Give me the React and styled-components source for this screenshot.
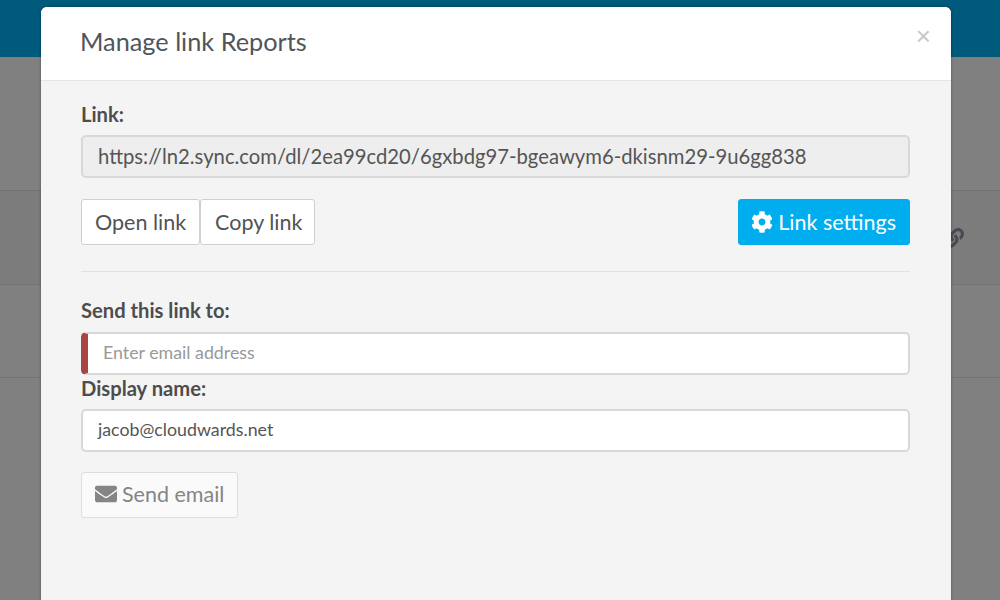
import React from "react";
import styled, { createGlobalStyle } from "styled-components";
import { FaCog, FaEnvelope, FaLink } from "react-icons/fa";

const Global = createGlobalStyle`
  html, body { margin: 0; padding: 0; height: 100%; overflow: hidden; background: #808080; }
  * { box-sizing: border-box; }
  body { font-family: Lato, "Open Sans", sans-serif; color: #464a4c; }
`;

const Page = styled.div`
  position: relative;
  width: 1000px;
  height: 600px;
  overflow: hidden;
  background: #808080;
`;
const TopBar = styled.div`
  height: 57px;
  background: #005a7c;
`;
const Rows = styled.div`
  padding-top: 133px;
`;
const Row = styled.div`
  height: ${(p) => p.$h}px;
  border-top: 1px solid #727272;
  background: ${(p) => (p.$active ? "#7c7c7c" : "transparent")};
  display: flex;
  justify-content: flex-end;
  align-items: center;
  padding-right: 36px;
  color: #484c52;
  font-size: 18px;
`;
const Modal = styled.div`
  position: absolute;
  left: 41px;
  top: 7px;
  width: 910px;
  height: 620px;
  border-radius: 6px 6px 0 0;
  background: #f4f4f4;
  box-shadow: 0 0 3px rgba(0, 0, 0, 0.35);
`;
const Header = styled.div`
  height: 74px;
  background: #fff;
  border-bottom: 1px solid #e5e5e5;
  border-radius: 6px 6px 0 0;
  display: flex;
  align-items: center;
  justify-content: space-between;
  padding: 0 20px 5px 39px;
`;
const Title = styled.h4`
  margin: 0;
  font-size: 25.3px;
  font-weight: 400;
  color: #50555a;
`;
const Close = styled.span`
  font-family: "Liberation Sans", sans-serif;
  font-size: 26px;
  font-weight: 400;
  color: #c8c8c8;
  margin-top: -9px;
`;
const Body = styled.div`
  padding: 21px 41px 0 40px;
`;
const Label = styled.label`
  display: block;
  margin-top: ${(p) => p.$mt || 0}px;
  margin-bottom: ${(p) => p.$mb || 9}px;
  font-size: 20.2px;
  font-weight: 700;
  line-height: 24px;
  color: #4d4d4d;
`;
const Field = styled.div`
  height: 43px;
  border: 2px solid #d8d8d8;
  border-radius: 5px;
  background: ${(p) => (p.$disabled ? "#eeeeee" : "#fff")};
  border-left: ${(p) => (p.$invalid ? "7px solid #a94442" : "2px solid #d8d8d8")};
  padding: 0 0 ${(p) => (p.$disabled ? 2 : 4)}px 15px;
  display: flex;
  align-items: center;
  font-size: ${(p) => p.$fs || 17.8}px;
  color: ${(p) => p.$color || "#555"};
  white-space: nowrap;
`;
const Actions = styled.div`
  display: flex;
  justify-content: space-between;
  margin-top: 21px;
`;
const Group = styled.div`
  display: flex;
`;
const Button = styled.button`
  height: 46px;
  padding: 0 13px;
  border: 1px solid #cfcfcf;
  border-radius: 3px;
  background: #fff;
  font: 400 21.5px Lato, sans-serif;
  color: #4f5358;
  display: inline-flex;
  align-items: center;
`;
const Copy = styled(Button)`
  padding: 0 12px 0 14px;
`;
const Primary = styled(Button)`
  background: #00aeef;
  border-color: #00aeef;
  color: #fff;
  gap: 5px;
  padding-left: 12px;
`;
const Divider = styled.hr`
  margin: 26px 0;
  border: 0;
  border-top: 1px solid #e2e2e2;
`;
const Send = styled(Button)`
  margin-top: 20px;
  padding-bottom: 2px;
  background: #fafafa;
  border-color: #dedede;
  color: #858585;
  gap: 5px;
`;

export default function App() {
  return (
    <Page>
      <Global />
      <TopBar />
      <Rows>
        <Row $h={94} $active><FaLink size={20} /></Row>
        <Row $h={93} />
        <Row $h={93} />
      </Rows>
      <Modal>
        <Header>
          <Title>Manage link Reports</Title>
          <Close>×</Close>
        </Header>
        <Body>
          <Label>Link:</Label>
          <Field $disabled $fs={20.25}>https://ln2.sync.com/dl/2ea99cd20/6gxbdg97-bgeawym6-dkisnm29-9u6gg838</Field>
          <Actions>
            <Group>
              <Button>Open link</Button>
              <Copy>Copy link</Copy>
            </Group>
            <Primary><FaCog size={22} />Link settings</Primary>
          </Actions>
          <Divider />
          <Label $mb={10}>Send this link to:</Label>
          <Field $invalid $color="#999">Enter email address</Field>
          <Label $mt={1}>Display name:</Label>
          <Field>jacob@cloudwards.net</Field>
          <Send><FaEnvelope size={22} />Send email</Send>
        </Body>
      </Modal>
    </Page>
  );
}
